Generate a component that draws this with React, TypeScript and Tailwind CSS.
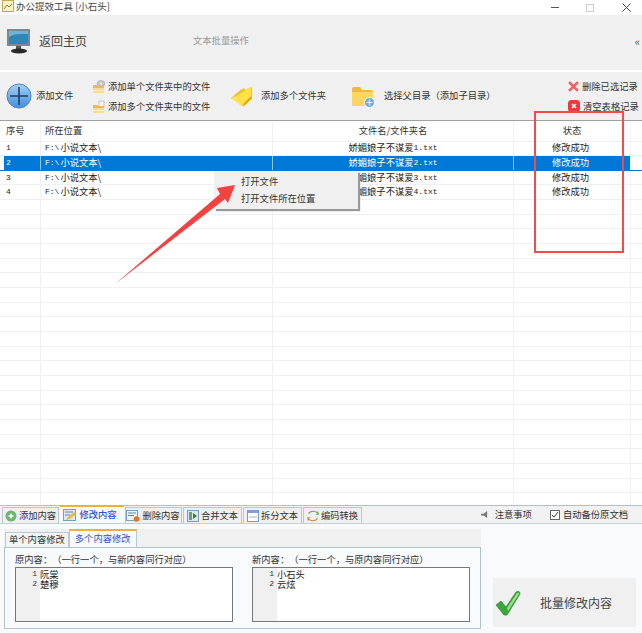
const font = { fontFamily: '"Noto Sans CJK SC", "Liberation Sans", sans-serif' };
const mono = { fontFamily: '"Liberation Mono", monospace' };

const rows = [
  { id: "1", name: "1" },
  { id: "2", name: "2" },
  { id: "3", name: "3" },
  { id: "4", name: "4" },
];

function SmallFolder({ badge }: { badge: "disk" | "page" }) {
  return (
    <svg viewBox="0 0 14 14" className="w-[14px] h-[14px] shrink-0">
      {badge === "disk" ? (
        <>
          <ellipse cx="9" cy="3.5" rx="4" ry="3" fill="#c4c8cc" stroke="#9a9ea2" strokeWidth=".5" />
          <circle cx="9" cy="3.5" r="1" fill="#eee" />
        </>
      ) : (
        <rect x="7" y="1" width="5" height="6" fill="#f4f4f4" stroke="#a8a8a8" strokeWidth=".6" />
      )}
      <path d="M1 5h4l1 1h6v7H1z" fill="#e8b85c" />
      <path d="M1 8h11v5H1z" fill="#fbdc8c" />
      <path d="M1 10.5h11" stroke="#fff0c0" />
    </svg>
  );
}

function PlusIcon() {
  return (
    <svg viewBox="0 0 26 26" className="w-[26px] h-[26px] shrink-0">
      <defs>
        <linearGradient id="pl" x1="0" y1="0" x2="0" y2="1">
          <stop offset="0" stopColor="#a8d0f2" />
          <stop offset="1" stopColor="#3f8fdc" />
        </linearGradient>
      </defs>
      <circle cx="13" cy="13" r="12" fill="url(#pl)" stroke="#4a86c0" />
      <path d="M13 4v18M4 13h18" stroke="#1f3f68" strokeWidth="1.6" />
    </svg>
  );
}

function Monitor() {
  return (
    <svg viewBox="0 0 26 26" className="w-[26px] h-[26px] shrink-0">
      <rect x="1" y="1" width="23" height="17" fill="#7c8a90" />
      <rect x="3" y="3" width="19" height="13" fill="#2f86b8" />
      <path d="M3 9c6-4 12-3 19-3V3H3z" fill="#6fb4d4" />
      <rect x="10" y="18" width="5" height="3" fill="#555" />
      <ellipse cx="13" cy="23" rx="8" ry="2.4" fill="#2a2a2a" />
    </svg>
  );
}

function BigFolder() {
  return (
    <svg viewBox="0 0 24 24" className="w-[23px] h-[24px] shrink-0">
      <path d="M1 14 12 5l3-1 1 2 5-3h2v12l-9 8z" fill="#f0c418" />
      <path d="M1 14l6-2 7 11-3-1z" fill="#ffe35a" />
      <path d="M7 12 19 4l3 0 0 11-8 8z" fill="#ffe14a" />
      <path d="M14 23l8-8v-3l-8 8z" fill="#e0a810" />
    </svg>
  );
}

function AddFolder() {
  return (
    <svg viewBox="0 0 24 24" className="w-[24px] h-[24px] shrink-0">
      <path d="M1 5q0-2 2-2h6l2 3h9q2 0 2 2v12q0 2-2 2H3q-2 0-2-2z" fill="#f0b93a" />
      <path d="M1 8h21v12q0 2-2 2H3q-2 0-2-2z" fill="#fbd662" />
      <circle cx="18.5" cy="18.5" r="5" fill="#6aa8de" stroke="#fff" />
      <path d="M18.5 15.5v6M15.5 18.5h6" stroke="#fff" strokeWidth="1.2" />
    </svg>
  );
}

function TabIcon({ kind }: { kind: string }) {
  if (kind === "add")
    return (
      <svg viewBox="0 0 12 12" className="w-3 h-3 shrink-0">
        <circle cx="6" cy="6" r="5.5" fill="#6db56d" />
        <path d="M6 3.5v5M3.5 6h5" stroke="#fff" strokeWidth="1.6" />
      </svg>
    );
  if (kind === "edit")
    return (
      <svg viewBox="0 0 14 12" className="w-[14px] h-3 shrink-0">
        <rect x="0.5" y="0.5" width="12" height="11" fill="#dce8f4" stroke="#7a9cc0" />
        <path d="M2 3h8M2 6h5" stroke="#5b86b4" />
        <path d="M3 11l2-3 6-5 2 2-6 5z" fill="#f0b840" />
      </svg>
    );
  if (kind === "del")
    return (
      <svg viewBox="0 0 14 12" className="w-[14px] h-3 shrink-0">
        <rect x="0.5" y="0.5" width="11" height="10" fill="#eef3f8" stroke="#7a9cc0" />
        <path d="M2 3h8M2 5.5h6" stroke="#5b86b4" />
        <circle cx="10.5" cy="9" r="2.8" fill="#e8702a" />
      </svg>
    );
  if (kind === "merge")
    return (
      <svg viewBox="0 0 12 12" className="w-3 h-3 shrink-0">
        <rect x="0.5" y="0.5" width="11" height="11" fill="#dbe7f2" stroke="#7a9cc0" />
        <rect x="2" y="2" width="3" height="8" fill="#6aa84f" />
        <path d="M6 3l4 3-4 3z" fill="#3d7a34" />
      </svg>
    );
  if (kind === "split")
    return (
      <svg viewBox="0 0 12 12" className="w-3 h-3 shrink-0">
        <rect x="0.5" y="0.5" width="11" height="11" fill="#fff" stroke="#7a9cc0" />
        <rect x="1" y="1" width="10" height="2" fill="#7aa6d4" />
        <path d="M2 7h8" stroke="#9ab4d0" />
      </svg>
    );
  return (
    <svg viewBox="0 0 12 12" className="w-3 h-3 shrink-0">
      <path d="M2 4q3-4 8-1l-1 2 3-.5L11 1l-1 1Q5-1 1 3z" fill="#6aa84f" />
      <path d="M10 8q-3 4-8 1l1-2-3 .5L1 11l1-1q5 3 9-1z" fill="#d08a3a" />
    </svg>
  );
}

const tabs = [
  { kind: "add", label: "添加内容", width: "w-[57px]" },
  { kind: "edit", label: "修改内容", width: "w-[64px] pr-[4px]", active: true },
  { kind: "del", label: "删除内容", width: "w-[57px] pr-[1px]" },
  { kind: "merge", label: "合并文本", width: "w-[59px]" },
  { kind: "split", label: "拆分文本", width: "w-[59px]" },
  { kind: "swap", label: "编码转换", width: "w-[59px]" },
];

function Row({ id, name, selected }: { id: string; name: string; selected?: boolean }) {
  const line = selected ? "border-[#8fc4ee]" : "border-[#f0f0f0]";
  const fill = selected ? "bg-[#0078d7] text-white" : "text-[#222]";
  return (
    <div className={`flex h-[14.67px] items-center border-b ${selected ? "border-b-[#0078d7]" : "border-b-[#f0f0f0]"}`}>
      <div className="w-[40px] shrink-0 h-full flex items-center">
        <div className={`ml-[4px] pl-[2px] w-[36px] h-full flex items-center text-[8px] ${fill}`} style={mono}>
          {id}
        </div>
      </div>
      <div className={`w-[232px] shrink-0 h-full flex items-center pl-[4px] border-l ${line} ${fill}`}>
        <span className="text-[8px] mr-[1px]" style={mono}>F:\</span>
        小说文本\
      </div>
      <div className={`w-[241px] shrink-0 h-full flex items-center justify-center border-l ${line} ${fill}`}>
        娇媚娘子不谋爱<span className="text-[8px]" style={mono}>{name}.txt</span>
      </div>
      <div className={`w-[117px] shrink-0 h-full flex items-center justify-center pr-[3px] border-l ${line} ${fill}`}>
        修改成功
      </div>
      <div className="flex-1 h-full border-l border-[#f0f0f0]" />
    </div>
  );
}

function EmptyRow() {
  return (
    <div className="flex h-[14.67px] border-b border-[#f0f0f0]">
      <div className="w-[40px] shrink-0" />
      <div className="w-[232px] shrink-0 border-l border-[#f0f0f0]" />
      <div className="w-[241px] shrink-0 border-l border-[#f0f0f0]" />
      <div className="w-[117px] shrink-0 border-l border-[#f0f0f0]" />
      <div className="flex-1 border-l border-[#f0f0f0]" />
    </div>
  );
}

function Editor({ lines }: { lines: string[] }) {
  return (
    <div className="flex h-[55px] w-[218px] bg-white border border-[#777]">
      <div className="w-[24px] shrink-0 bg-[#f0f0f0] text-right pr-[3px] pt-[1px] text-[8px] leading-[10px] text-[#333]" style={mono}>
        {lines.map((_, i) => (
          <div key={i}>{i + 1}</div>
        ))}
      </div>
      <div className="pt-[1px] leading-[10px] text-[#222]">
        {lines.map((l) => (
          <div key={l}>{l}</div>
        ))}
      </div>
    </div>
  );
}

export default function App() {
  return (
    <div className="relative w-[642px] h-[633px] overflow-hidden bg-white flex flex-col text-[9.3px] text-[#333] [text-spacing-trim:space-all]" style={font}>
      {/* title bar */}
      <div className="h-[15px] flex items-center shrink-0 bg-white">
        <svg viewBox="0 0 12 12" className="w-[12px] h-[12px] -mt-[3px] ml-[2px]">
          <rect x="0.5" y="0.5" width="11" height="11" fill="#fdf3c8" stroke="#c9a94e" />
          <path d="M2 9l3-4 2 2 3-3" stroke="#8a7a3a" fill="none" />
        </svg>
        <span className="ml-[2px] -mt-[3px] text-[9.5px] leading-[12px] text-[#444]">办公提效工具 [小石头]</span>
        <div className="ml-auto flex items-center">
          <div className="w-[8px] h-px bg-[#555] mr-[27px]" />
          <div className="w-[8px] h-[8px] border border-[#ccc] mr-[28px]" />
          <svg viewBox="0 0 9 9" className="w-[9px] h-[9px] mr-[11px]">
            <path d="M.5.5l8 8M8.5.5l-8 8" stroke="#444" />
          </svg>
        </div>
      </div>

      {/* header */}
      <div className="h-[56px] shrink-0 bg-[#f0f0f0] flex items-center pl-[6px] border-b border-[#fff] pb-[3px]">
        <Monitor />
        <span className="ml-[7px] w-[154px] text-[12px] text-[#444]">返回主页</span>
        <span className="text-[#999]">文本批量操作</span>
        <span className="ml-auto mr-[2px] text-[11px] text-[#555]">«</span>
      </div>

      {/* toolbar */}
      <div className="h-[50px] shrink-0 bg-[#f0f0f0] flex items-center pl-[6px] border-b border-[#a0a0a0] border-t border-t-white">
        <PlusIcon />
        <span className="ml-[4px] w-[56px]">添加文件</span>
        <div className="flex flex-col gap-[6px] w-[138px] mt-[1px]">
          <div className="flex items-center gap-[2px]">
            <SmallFolder badge="disk" />
            <span>添加单个文件夹中的文件</span>
          </div>
          <div className="flex items-center gap-[2px]">
            <SmallFolder badge="page" />
            <span>添加多个文件夹中的文件</span>
          </div>
        </div>
        <BigFolder />
        <span className="ml-[8px] w-[90px]">添加多个文件夹</span>
        <AddFolder />
        <span className="ml-[9px] w-[184px]">选择父目录（添加子目录）</span>
        <div className="flex flex-col gap-[6px] whitespace-nowrap mt-[1px]">
          <div className="flex items-center gap-[3px]">
            <svg viewBox="0 0 10 10" className="w-[11px] h-[11px]">
              <path d="M1 1l8 8M9 1L1 9" stroke="#f06060" strokeWidth="2.4" />
            </svg>
            <span>删除已选记录</span>
          </div>
          <div className="flex items-center gap-[3px]">
            <svg viewBox="0 0 12 12" className="w-[12px] h-[12px]">
              <rect width="12" height="12" rx="3.5" fill="#ea3a3a" />
              <path d="M4 4l4 4M8 4l-4 4" stroke="#fff" strokeWidth="1.5" />
            </svg>
            <span>清空表格记录</span>
          </div>
        </div>
      </div>

      {/* table */}
      <div className="flex-1 min-h-0 overflow-hidden bg-white">
        <div className="flex h-[20.5px] items-center pt-[1px] border-b border-[#f0f0f0] text-[#333]">
          <div className="w-[40px] shrink-0 pl-[6px]">序号</div>
          <div className="w-[232px] shrink-0 pl-[4px] h-full flex items-center border-l border-[#f0f0f0]">所在位置</div>
          <div className="w-[241px] shrink-0 text-center h-full flex items-center justify-center border-l border-[#f0f0f0]">文件名/文件夹名</div>
          <div className="w-[117px] shrink-0 text-center h-full flex items-center justify-center border-l border-[#f0f0f0]">状态</div>
          <div className="flex-1 h-full border-l border-[#f0f0f0]" />
        </div>
        {rows.map((r) => (
          <Row key={r.id} id={r.id} name={r.name} selected={r.id === "2"} />
        ))}
        {Array.from({ length: 22 }).map((_, i) => (
          <EmptyRow key={i} />
        ))}
      </div>

      {/* bottom tab strip */}
      <div className="h-[19px] shrink-0 bg-[#f2f2f2] border-t border-[#b4c0c8] border-b border-b-[#c0d0dc] flex items-end pl-[2px] text-[#333]">
        <div className="flex gap-[1px] h-[15px] items-end">
          {tabs.map((t) => (
            <div
              key={t.label}
              className={`flex items-center justify-center gap-[2px] whitespace-nowrap ${t.width} ${t.active ? "bg-[#f8fafc] border-t-2 border-[#f0b040] text-[#2a52d0] h-[18px] font-medium" : "bg-[#f0f0f0] border border-[#b8c8d4] border-b-0 h-[16px]"}`}
            >
              <TabIcon kind={t.kind} />
              <span>{t.label}</span>
            </div>
          ))}
        </div>
        <div className="ml-auto flex items-center h-full pr-[14px]">
          <svg viewBox="0 0 8 8" className="w-[7px] h-[7px] mr-[7px]">
            <path d="M0 3h3l4-3v8L3 5H0z" fill="#777" />
          </svg>
          <span className="mr-[18px]">注意事项</span>
          <div className="w-[10px] h-[10px] border border-[#666] flex items-center justify-center mr-[3px] bg-white">
            <svg viewBox="0 0 8 8" className="w-[8px] h-[8px]">
              <path d="M1 4l2 2 4-5" stroke="#333" fill="none" />
            </svg>
          </div>
          <span>自动备份原文档</span>
        </div>
      </div>

      {/* bottom panel */}
      <div className="h-[109px] shrink-0 bg-[#f8fafc] flex pl-[4px] pt-[5px] pb-[4px]">
        <div className="w-[477px] flex flex-col">
          <div className="h-[18px] shrink-0 bg-[#f0f0f0] flex items-end pl-[1px]">
            <div className="h-[15px] px-[3px] flex items-center bg-[#f4f4f4] border border-[#b8c8d4] border-b-0">单个内容修改</div>
            <div className="h-[18px] px-[5px] flex items-center bg-[#f8fafc] border-t-2 border-x border-[#f0b040] border-x-[#b8c8d4] text-[#2a52d0]">多个内容修改</div>
          </div>
          <div className="flex-1 border border-[#b0c4d0] px-[10px] flex gap-[19px] pt-[4px]">
            <div>
              <div className="h-[14px] leading-[14px] mb-[1px] whitespace-nowrap">原内容：（一行一个，与新内容同行对应）</div>
              <Editor lines={["阮棠", "楚穆"]} />
            </div>
            <div>
              <div className="h-[14px] leading-[14px] mb-[1px] whitespace-nowrap">新内容：（一行一个，与原内容同行对应）</div>
              <Editor lines={["小石头", "云炫"]} />
            </div>
          </div>
        </div>
        <div className="flex-1 flex items-end pl-[12px] pr-[6px] pb-[2px]">
          <div className="w-full h-[49px] bg-[#f0f0f0] flex items-center pl-[2px]">
            <svg viewBox="0 0 26 26" className="w-[26px] h-[26px]">
              <path d="M1 15l5-4 5 6L21 2q4-2 4 2L12 25H9z" fill="#38a838" stroke="#2a7a2a" strokeWidth=".6" />
              <path d="M12 18 22 3q2-1 2 1L13 21z" fill="#9adf8a" />
            </svg>
            <span className="ml-[19px] text-[12px] text-[#444]">批量修改内容</span>
          </div>
        </div>
      </div>

      {/* context menu */}
      <div className="absolute left-[214px] top-[171px] w-[144px] h-[38px] bg-[#f0f0f0] shadow-[2px_2px_1px_#999] text-[#333] pl-[27px] pt-[2px] leading-[17px]">
        <div>打开文件</div>
        <div>打开文件所在位置</div>
      </div>

      {/* annotation */}
      <div className="absolute left-[534px] top-[111px] w-[90px] h-[142px] border-2 border-[#f44a4a]" />
      <svg className="absolute left-0 top-0 w-[642px] h-[633px] pointer-events-none" viewBox="0 0 642 633">
        <polygon points="115,284 220,194 217,188 235,185 228,203 225,199" fill="#f44242" />
      </svg>
    </div>
  );
}
